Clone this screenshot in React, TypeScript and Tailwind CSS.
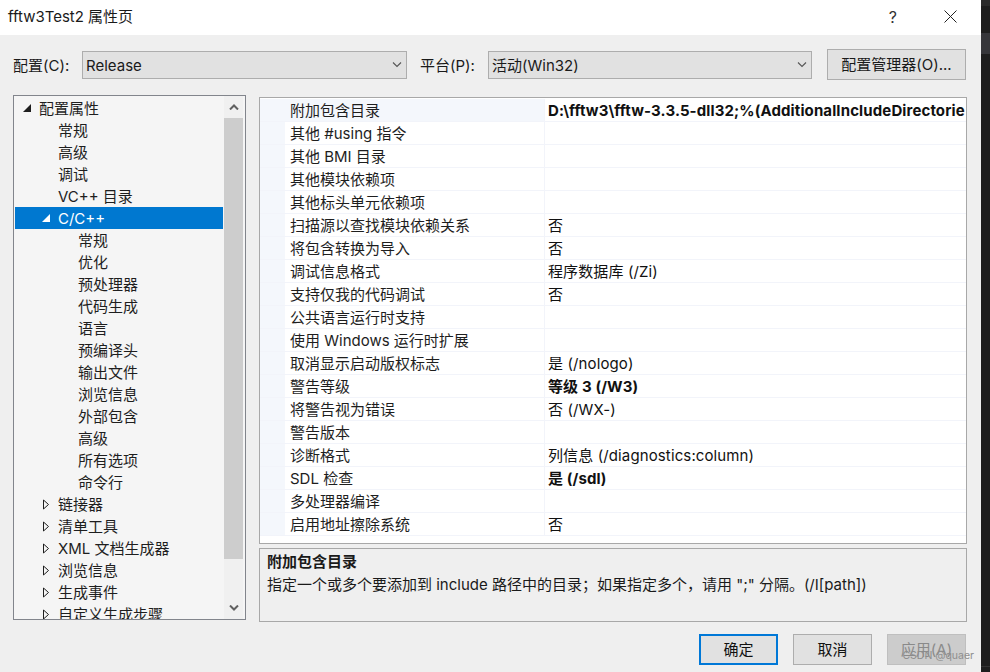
// Visual Studio property page dialog

const treeItems: { label: string; level: 0 | 1 | 2; arrow?: "open" | "closed"; selected?: boolean }[] = [
  { label: "配置属性", level: 0, arrow: "open" },
  { label: "常规", level: 1 },
  { label: "高级", level: 1 },
  { label: "调试", level: 1 },
  { label: "VC++ 目录", level: 1 },
  { label: "C/C++", level: 1, arrow: "open", selected: true },
  { label: "常规", level: 2 },
  { label: "优化", level: 2 },
  { label: "预处理器", level: 2 },
  { label: "代码生成", level: 2 },
  { label: "语言", level: 2 },
  { label: "预编译头", level: 2 },
  { label: "输出文件", level: 2 },
  { label: "浏览信息", level: 2 },
  { label: "外部包含", level: 2 },
  { label: "高级", level: 2 },
  { label: "所有选项", level: 2 },
  { label: "命令行", level: 2 },
  { label: "链接器", level: 1, arrow: "closed" },
  { label: "清单工具", level: 1, arrow: "closed" },
  { label: "XML 文档生成器", level: 1, arrow: "closed" },
  { label: "浏览信息", level: 1, arrow: "closed" },
  { label: "生成事件", level: 1, arrow: "closed" },
  { label: "自定义生成步骤", level: 1, arrow: "closed" },
];

const indent = { 0: "pl-[8px]", 1: "pl-[27px]", 2: "pl-[47px]" };

const rows: { name: string; value?: string; bold?: boolean }[] = [
  { name: "附加包含目录", value: "D:\\fftw3\\fftw-3.3.5-dll32;%(AdditionalIncludeDirectorie", bold: true },
  { name: "其他 #using 指令" },
  { name: "其他 BMI 目录" },
  { name: "其他模块依赖项" },
  { name: "其他标头单元依赖项" },
  { name: "扫描源以查找模块依赖关系", value: "否" },
  { name: "将包含转换为导入", value: "否" },
  { name: "调试信息格式", value: "程序数据库 (/Zi)" },
  { name: "支持仅我的代码调试", value: "否" },
  { name: "公共语言运行时支持" },
  { name: "使用 Windows 运行时扩展" },
  { name: "取消显示启动版权标志", value: "是 (/nologo)" },
  { name: "警告等级", value: "等级 3 (/W3)", bold: true },
  { name: "将警告视为错误", value: "否 (/WX-)" },
  { name: "警告版本" },
  { name: "诊断格式", value: "列信息 (/diagnostics:column)" },
  { name: "SDL 检查", value: "是 (/sdl)", bold: true },
  { name: "多处理器编译" },
  { name: "启用地址擦除系统", value: "否" },
];

function Chevron({ up = false, thick = false, className = "" }: { up?: boolean; thick?: boolean; className?: string }) {
  return (
    <svg width="10" height="6" viewBox="0 0 10 6" className={className}>
      <path
        d={up ? "M1 5.5 L5 1.5 L9 5.5" : "M1 0.5 L5 4.5 L9 0.5"}
        fill="none"
        stroke="currentColor"
        strokeWidth={thick ? 2 : 1.1}
      />
    </svg>
  );
}

function TreeArrow({ kind, selected }: { kind: "open" | "closed"; selected?: boolean }) {
  if (kind === "open") {
    return (
      <svg width="8" height="8" viewBox="0 0 8 8">
        <path d="M8 0 V8 H0 Z" fill={selected ? "#ffffff" : "#1e1e1e"} />
      </svg>
    );
  }
  return (
    <svg width="8" height="11" viewBox="0 0 8 11">
      <path d="M1.5 1 L6.5 5.5 L1.5 10 Z" fill="none" stroke="#1e1e1e" strokeWidth="1" />
    </svg>
  );
}

function Select({ value, width }: { value: string; width: string }) {
  return (
    <div className={`flex h-[28px] items-center justify-between border border-[#adadad] bg-[#e1e1e1] pl-[3px] pr-[4px] ${width}`}>
      <span className="mt-[1px]">{value}</span>
      <Chevron className="text-[#555555]" />
    </div>
  );
}

function Tree() {
  return (
    <div className="flex h-[525px] w-[233px] shrink-0 overflow-hidden border border-[#82858c] bg-[#f5f5f5] pl-[1px]">
      <div className="h-full w-[208px] shrink-0 overflow-hidden pt-[1px]">
        {treeItems.map((item, i) => (
          <div
            key={i}
            className={`flex h-[22px] items-center gap-[8px] ${indent[item.level]} ${
              item.selected ? "bg-[#0078d0] text-white" : "text-[#1e1e1e]"
            }`}
          >
            <div className="flex w-[8px] shrink-0 items-center justify-center">
              {item.arrow && <TreeArrow kind={item.arrow} selected={item.selected} />}
            </div>
            <span className="whitespace-nowrap">{item.label}</span>
          </div>
        ))}
      </div>
      <div className="ml-[1px] flex h-full w-[19px] flex-col bg-[#f0f0f0] text-[#606060]">
        <div className="flex h-[22px] items-center justify-center">
          <Chevron up thick />
        </div>
        <div className="h-[441px] bg-[#cdcdcd]" />
        <div className="flex-1" />
        <div className="flex h-[22px] items-center justify-center">
          <Chevron thick />
        </div>
      </div>
    </div>
  );
}

function PropertyGrid() {
  return (
    <div className="mt-[2px] h-[447px] shrink-0 overflow-hidden border border-[#a8a8a8] bg-white pt-[1px]">
      {rows.map((row, i) => (
        <div key={i} className="flex h-[23px] border-b border-[#f2f4fa]">
          <div className="w-[25px] shrink-0 bg-[#f4f7fc]" />
          <div
            className={`flex w-[260px] shrink-0 items-center border-r border-[#f2f4fa] pl-[5px] text-[#1e1e1e] ${
              i === 0 ? "bg-[#f4f7fc]" : ""
            }`}
          >
            {row.name}
          </div>
          <div
            className={`flex flex-1 items-center overflow-hidden whitespace-nowrap pl-[3px] tracking-[0.12px] text-[#111111] ${
              row.bold ? "font-bold" : ""
            }`}
          >
            {row.value}
          </div>
        </div>
      ))}
    </div>
  );
}

function DialogButton({ label, variant = "normal" }: { label: string; variant?: "normal" | "primary" | "disabled" }) {
  const styles = {
    normal: "border border-[#adadad] bg-[#e1e1e1] text-[#111111]",
    primary: "border-2 border-[#0078d7] bg-[#e1e1e1] text-[#111111]",
    disabled: "border border-[#bfbfbf] bg-[#cccccc] text-[#8a8a8a]",
  };
  return <div className={`flex h-[31px] w-[79px] items-center justify-center ${styles[variant]}`}>{label}</div>;
}

export default function App() {
  return (
    <div className="relative flex h-[672px] w-[990px] overflow-hidden font-['Inter','Noto_Sans_CJK_SC',sans-serif] text-[15px] leading-none text-[#1a1a1a]">
      <div className="flex w-[981px] shrink-0 flex-col bg-[#efefef]">
        {/* title bar */}
        <div className="flex h-[35px] shrink-0 items-center justify-between bg-white pb-[2px] pl-[8px] pr-[24px]">
          <span>fftw3Test2 属性页</span>
          <div className="flex items-center gap-[47px]">
            <span className="text-[16px] text-[#333333]">?</span>
            <svg width="13" height="13" viewBox="0 0 13 13">
              <path d="M0.5 0.5 L12.5 12.5 M12.5 0.5 L0.5 12.5" stroke="#222222" strokeWidth="1" />
            </svg>
          </div>
        </div>

        <div className="flex flex-1 flex-col pl-[13px] pr-[14px]">
          {/* configuration row */}
          <div className="mt-[14px] flex h-[31px] shrink-0 items-center">
            <span className="mt-[2px] w-[69px]">配置(C):</span>
            <Select value="Release" width="w-[325px]" />
            <span className="ml-[13px] mt-[2px] w-[68px]">平台(P):</span>
            <Select value="活动(Win32)" width="w-[324px]" />
            <div className="ml-[15px] flex h-[31px] w-[139px] items-center justify-center border border-[#adadad] bg-[#e1e1e1]">
              配置管理器(O)...
            </div>
          </div>

          <div className="mt-[15px] flex gap-[13px]">
            <Tree />
            <div className="flex w-[708px] flex-col">
              <PropertyGrid />
              <div className="mt-[4px] h-[74px] border border-[#a8a8a8] pl-[7px] pt-[5px]">
                <div className="h-[23px] font-bold leading-[16px]">附加包含目录</div>
                <div className="leading-[16px]">
                  指定一个或多个要添加到 include 路径中的目录；如果指定多个，请用 ";" 分隔。(/I[path])
                </div>
              </div>
            </div>
          </div>

          {/* dialog buttons */}
          <div className="mt-[12px] flex justify-end gap-[15px] pr-[1px]">
            <DialogButton label="确定" variant="primary" />
            <DialogButton label="取消" />
            <DialogButton label="应用(A)" variant="disabled" />
          </div>
        </div>
      </div>

      {/* window behind the dialog */}
      <div className="flex w-[9px] shrink-0 flex-col bg-[#1e1e1e]">
        <div className="h-[6px] bg-[#2b2b2b]" />
        <div className="mt-[27px] h-[21px] bg-[#36363a]" />
        <div className="mt-[612px] h-px bg-[#333333]" />
      </div>

      <span className="absolute right-[16px] top-[651px] text-[10.5px] text-[#8e8e8e]">CSDN @quaer</span>
    </div>
  );
}
